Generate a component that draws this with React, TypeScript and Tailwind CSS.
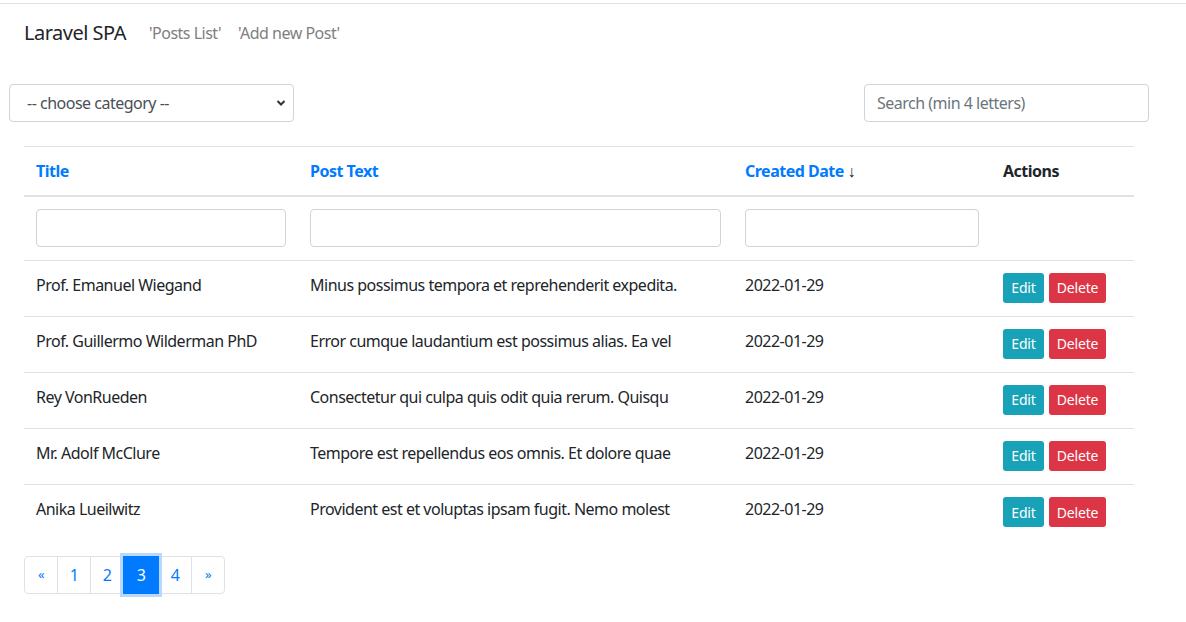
import React from "react";

const rows = [
  ["Prof. Emanuel Wiegand", "Minus possimus tempora et reprehenderit expedita.", "2022-01-29"],
  ["Prof. Guillermo Wilderman PhD", "Error cumque laudantium est possimus alias. Ea vel", "2022-01-29"],
  ["Rey VonRueden", "Consectetur qui culpa quis odit quia rerum. Quisqu", "2022-01-29"],
  ["Mr. Adolf McClure", "Tempore est repellendus eos omnis. Et dolore quae", "2022-01-29"],
  ["Anika Lueilwitz", "Provident est et voluptas ipsam fugit. Nemo molest", "2022-01-29"],
];

const font = { fontFamily: '"Noto Sans", "Open Sans", sans-serif' };

function Nav() {
  return (
    <div className="mt-[3px] border-t border-[#dee2e6]">
      <nav className="flex items-center h-[56px] pl-6 pt-[2px]">
        <span className="text-[20px] text-[#212529] mr-[23px]">Laravel SPA</span>
        <a className="text-[16px] text-[#808080] mr-[17px]">'Posts List'</a>
        <a className="text-[16px] text-[#808080]">'Add new Post'</a>
      </nav>
    </div>
  );
}

function Filters() {
  return (
    <div className="flex justify-between mt-[24px] pl-[9px] pr-[37px]">
      <div className="relative w-[285px] h-[38px] rounded border border-[#ced4da] bg-white flex items-center pl-[17px]">
        <span className="text-[16px] text-[#495057]">-- choose category --</span>
        <svg className="absolute right-[7px] top-[14px]" width="10" height="8" viewBox="0 0 10 8">
          <path d="M1.5 2 L5 5.5 L8.5 2" fill="none" stroke="#333" strokeWidth="2" />
        </svg>
      </div>
      <div className="w-[285px] h-[38px] rounded border border-[#ced4da] bg-white flex items-center pl-3">
        <span className="text-[16px] text-[#6c757d]">Search (min 4 letters)</span>
      </div>
    </div>
  );
}

function Table() {
  return (
    <div className="mx-6 mt-[24px] w-[1110px]">
      <div className="grid grid-cols-[274px_435px_258px_143px] border-t border-[#dee2e6] border-b-2 h-[51px] items-center text-[16px] font-bold">
        <div className="px-3 text-[#007bff]">Title</div>
        <div className="px-3 text-[#007bff]">Post Text</div>
        <div className="px-3 text-[#007bff]">
          Created Date <span className="text-[#212529] font-normal">↓</span>
        </div>
        <div className="px-3 text-[#212529]">Actions</div>
      </div>
      <div className="grid grid-cols-[274px_435px_258px_143px] border-b border-[#dee2e6] h-[64px] items-center pb-[2px]">
        <div className="px-3">
          <div className="h-[38px] rounded border border-[#ced4da]" />
        </div>
        <div className="px-3">
          <div className="h-[38px] rounded border border-[#ced4da]" />
        </div>
        <div className="px-3">
          <div className="h-[38px] rounded border border-[#ced4da]" />
        </div>
        <div />
      </div>
      {rows.map((r, i) => (
        <div
          key={i}
          className={`grid grid-cols-[274px_435px_258px_143px] h-[56px] items-center text-[16px] text-[#212529] ${
            i < rows.length - 1 ? "border-b border-[#dee2e6]" : ""
          }`}
        >
          <div className="px-3 whitespace-nowrap pb-[8px]">{r[0]}</div>
          <div className="px-3 whitespace-nowrap pb-[8px]">{r[1]}</div>
          <div className="px-3 pb-[8px]">{r[2]}</div>
          <div className="px-3 flex gap-[5px] mb-[2px] tracking-[-0.2px]">
            <button className="h-[30px] w-[41px] rounded-[3px] bg-[#17a2b8] text-white text-[14px]">Edit</button>
            <button className="h-[30px] w-[57px] rounded-[3px] bg-[#dc3545] text-white text-[14px]">Delete</button>
          </div>
        </div>
      ))}
    </div>
  );
}

function Pagination() {
  const items = ["«", "1", "2", "3", "4", "»"];
  return (
    <div className="ml-6 mt-[15px] flex">
      {items.map((it, i) => {
        const active = it === "3";
        const small = it === "«" || it === "»";
        return (
          <div
            key={i}
            className={`h-[38px] flex items-center justify-center border ${
              active
                ? "w-[36px] bg-[#007bff] border-[#007bff] text-white ring-[3px] ring-[#b8d8fd] z-10"
                : "w-[34px] bg-white border-[#dee2e6] text-[#007bff]"
            } ${i > 0 ? "-ml-px" : "rounded-l"} ${i === items.length - 1 ? "rounded-r" : ""} ${
              small ? "text-[13px]" : "text-[16px]"
            }`}
          >
            {it}
          </div>
        );
      })}
    </div>
  );
}

export default function App() {
  return (
    <div className="w-[1186px] h-[622px] bg-white overflow-hidden tracking-[-0.5px]" style={font}>
      <Nav />
      <Filters />
      <Table />
      <Pagination />
    </div>
  );
}
